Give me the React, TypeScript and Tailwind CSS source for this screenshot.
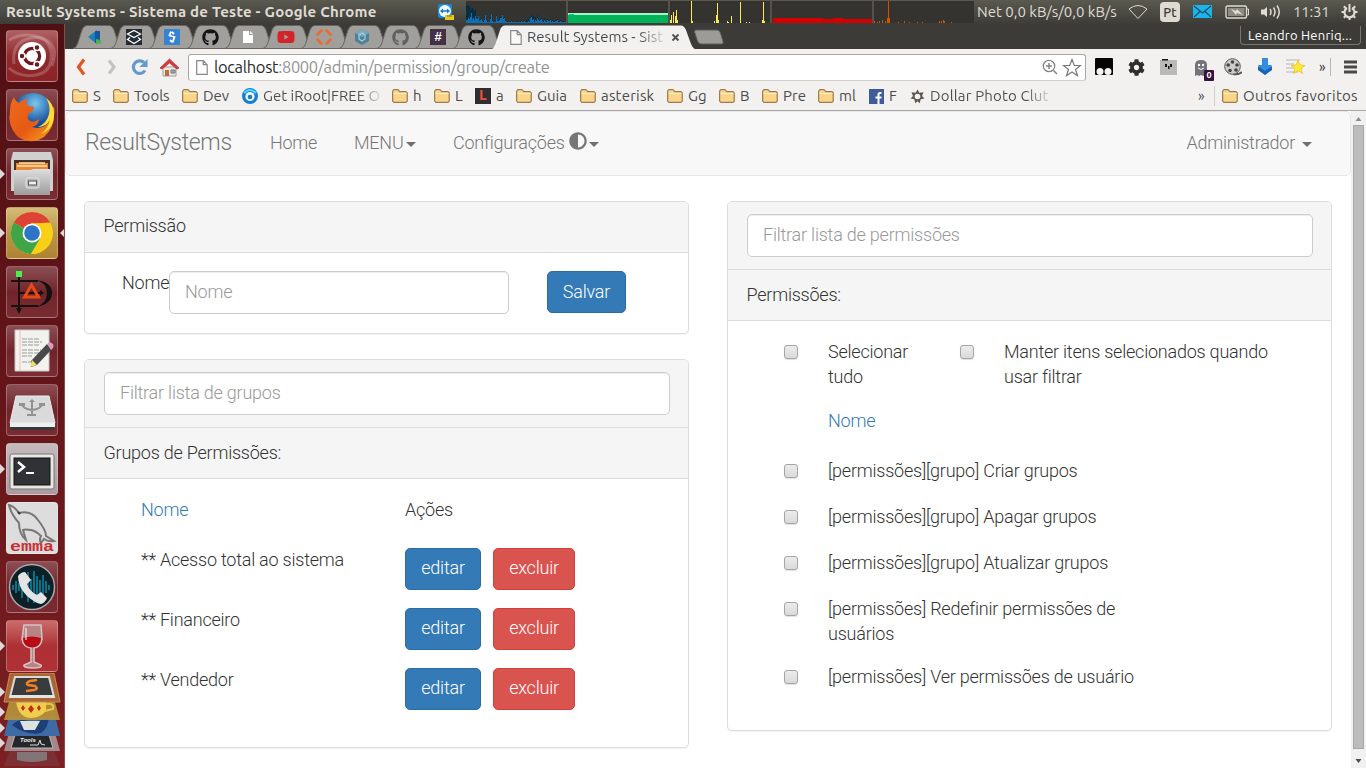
import React from "react";
import { FaGithub, FaYoutube, FaCog, FaAdjust } from "react-icons/fa";

const UBUNTU = "font-['Ubuntu','Noto_Sans',sans-serif]";

/* ---------- top panel ---------- */

const cpu = [18,17,18,16,15,14,15,14,12,14,6,6,7,3,4,5,3,2,4,9,4,2,1,1,5,10,3,2,1,1,8,3,3,4,6,6,9,5,6,3,1,2,1,1,2,3,2,1,1,1,2,1,1,1,2,3,2,1,3,2,3,2,4,2,7,8,6,7,3,6,4,8,5,3,4,5,3,2,5,3,2,4,3,3,4,2,3,2,1,3,3,4,2,2,3,1,2,2,1,1];
const cpuUser = [3,3,5,4,6,10,4,5,3,7,5,4,7,2,3,4,2,1,3,8,3,1,1,1,4,9,2,1,1,1,7,2,2,3,5,5,8,4,5,2,1,1,1,1,1,2,1,1,1,1,1,1,1,1,1,2,1,1,2,1,1,1,2,1,5,6,3,4,1,3,2,5,3,2,3,4,2,1,3,2,1,3,2,2,3,1,2,1,1,2,2,3,1,1,2,1,1,1,1,1];

function Graphs() {
  return (
    <svg width="508" height="24" viewBox="0 0 508 24" shapeRendering="crispEdges" className="ml-[11px] shrink-0">
      <rect y="1" width="508" height="22" fill="#34332f" />
      {[100, 202, 304, 406].map((x) => <rect key={x} x={x} width="2" height="23" fill="#54524b" />)}
      {cpu.map((v, i) => <rect key={i} x={i} y={23 - v} width="1" height={v} fill="#062f42" />)}
      {cpuUser.map((v, i) => <rect key={i} x={i} y={23 - v} width="1" height={v} fill="#0970b9" />)}
      <rect x="102" y="13" width="100" height="10" fill="#00b35b" />
      <rect x="102" y="13" width="100" height="2" fill="#a9f1c9" />
      <rect x="103" y="14" width="5" height="1" fill="#00d66a" />
      {[[204,3],[205,8],[207,11],[209,7],[210,13],[211,3],[225,22],[226,2],[248,2],[251,20],[250,8],[252,3],[261,2],[262,1],[265,7],[274,21],[280,1],[283,1],[297,21],[296,3],[298,2]].map(([x, h]) => (
        <rect key={x} x={x} y={23 - h} width="1" height={h} fill="#fce94f" />
      ))}
      <path d="M307 23V18H357V19H367V18H377V19H406V23z" fill="#d40000" />
      {[[408,2],[411,1],[413,2],[416,3],[419,2],[421,5],[422,22],[423,5],[432,1],[438,2],[443,1],[451,1],[456,1],[473,2],[475,2],[477,3],[478,2],[485,1]].map(([x, h]) => (
        <rect key={x} x={x} y={23 - h} width="1" height={h} fill="#d35400" />
      ))}
    </svg>
  );
}

function TopBar() {
  return (
    <header className={`flex h-6 shrink-0 items-center bg-gradient-to-b from-[#5b5a50] to-[#3d3c38] text-[#dfdbd2] ${UBUNTU}`}>
      <div className="w-[437px] shrink-0 whitespace-nowrap pl-1.5 text-[15px] leading-6 font-bold tracking-[0.24px]">Result Systems - Sistema de Teste - Google Chrome</div>
      <svg width="18" height="18" viewBox="0 0 18 18" className="shrink-0">
        <rect x="1" y="1" width="14" height="14" rx="2" fill="#1689dc" />
        <circle cx="8" cy="8" r="6" fill="#f5fbff" />
        <path d="M3 8l3-2.500v1.700h4V5.500l3 2.500-3 2.500V8.800H6v1.700z" fill="#1279cb" />
        <path d="M8 12h9v5H8z" fill="#efc526" /><path d="M10 13h5" stroke="#8a6c00" />
      </svg>
      <Graphs />
      <div className="ml-[3px] w-[151px] shrink-0 whitespace-nowrap text-[15px]">Net 0,0 kB/s/0,0 kB/s</div>
      <svg width="20" height="16" viewBox="0 0 20 16" fill="none" stroke="#dfdbd2" className="shrink-0">
        <path d="M1 5Q10-2 19 5L10 14.500z" />
      </svg>
      <div className="ml-3 h-5 w-5 shrink-0 rounded-sm bg-[#dfdbd2] text-center text-[13px] leading-5 font-medium text-[#3c3b37]">Pt</div>
      <svg width="19" height="14" viewBox="0 0 19 14" className="ml-[13px] shrink-0">
        <rect width="19" height="13" fill="#19b6ee" />
        <path d="M1 1l8.500 7L18 1M1 12l6-5.500M18 12l-6-5.500" stroke="#2c4a55" fill="none" strokeWidth="1.200" />
      </svg>
      <svg width="25" height="14" viewBox="0 0 25 14" className="ml-[13px] shrink-0">
        <rect x="1" y="1" width="20.500" height="12" rx="1.500" fill="none" stroke="#dfdbd2" strokeWidth="1.400" />
        <rect x="3" y="3" width="16.500" height="8" fill="#8d8a82" />
        <path d="M22 4h1.500v6H22" stroke="#dfdbd2" fill="none" />
        <path d="M6 4l5 2 1-2 6 6-6-2-1 2z" fill="#dfdbd2" />
      </svg>
      <svg width="21" height="16" viewBox="0 0 21 16" className="ml-[11px] shrink-0">
        <path d="M0 5.500h3L6 3v10l-3-2.500H0z" fill="#dfdbd2" />
        <path d="M9 5q2 3 0 6M12.500 3.500q3 4.500 0 9M16 1.500q4.500 6.500 0 13" stroke="#dfdbd2" strokeWidth="1.500" fill="none" />
      </svg>
      <div className="ml-[11px] w-[48px] shrink-0 text-[15px] tracking-[-0.2px]">11:31</div>
      <svg width="17" height="16" viewBox="0 0 16 16" className="shrink-0" stroke="#dfdbd2" fill="none">
        <path d="M5.500 4A5 5 0 1 0 10.500 4" strokeWidth="2.200" />
        <path d="M8 0v8M0 8H3M13 8h3M2.300 2.300l2 2M13.700 2.300l-2 2M2.300 13.700l2-2M13.700 13.700l-2-2M8 13v3" strokeWidth="2" />
      </svg>
    </header>
  );
}

/* ---------- launcher ---------- */

function Tile({ className, left, right, children }: { className: string; left?: boolean; right?: boolean; children: React.ReactNode }) {
  return (
    <div className="relative flex h-[59px] w-[65px] shrink-0 justify-center pr-px">
      <div className={`h-[52px] w-[52px] rounded-[4px] border border-white/25 ${className}`}>
        <svg width="50" height="50" viewBox="1 1 50 50" className="block overflow-visible">{children}</svg>
      </div>
      {left && <svg width="5" height="10" className="absolute left-0 top-[21px]"><path d="M0 0l5 5-5 5z" fill="#ded9d8" /></svg>}
      {right && <svg width="5" height="10" className="absolute right-0 top-[21px]"><path d="M5 0L0 5l5 5z" fill="#ded9d8" /></svg>}
    </div>
  );
}

const WINE = "bg-gradient-to-b from-[#8a4e54] via-[#70242a] to-[#7b2c33]";

function Launcher() {
  return (
    <aside className="flex w-[65px] shrink-0 flex-col overflow-hidden border-r border-[#8a4a4a] bg-gradient-to-b from-[#4f1013] via-[#651519] to-[#7c2022] pt-1.5">
      <Tile className="bg-gradient-to-b from-[#b06064] via-[#8f2a2e] to-[#8c2326]">
        <g fill="none" stroke="#fff" strokeOpacity=".2" strokeWidth="3">
          <path d="M3 38Q14 48 30 45T45 25M8 34Q5 12 25 8T46 30" /><path d="M3 10Q18 1 36 8T46 36" />
        </g>
        <circle cx="26" cy="26" r="14" fill="#fff" />
        <circle cx="26" cy="26" r="7.500" fill="none" stroke="#6d1a1e" strokeWidth="3.500" />
        <g stroke="#fff" strokeWidth="1.500"><path d="M26 26l5-9M26 26l5 9M26 26H15" /><circle cx="31" cy="17.500" r="3" fill="#6d1a1e" /><circle cx="31" cy="34.500" r="3" fill="#6d1a1e" /><circle cx="16" cy="26" r="3" fill="#6d1a1e" /></g>
        <circle cx="26" cy="26" r="5.800" fill="#fff" />
      </Tile>
      <Tile className={WINE}>
        <defs>
          <radialGradient id="globe" cx=".55" cy=".25"><stop offset="0" stopColor="#7cc8f0" /><stop offset="1" stopColor="#134a9a" /></radialGradient>
          <linearGradient id="fox" x2="1" y2="1"><stop offset="0" stopColor="#ee6a1d" /><stop offset=".55" stopColor="#e65a14" /><stop offset="1" stopColor="#f8a91c" /></linearGradient>
        </defs>
        <circle cx="27" cy="25" r="21" fill="url(#globe)" />
        <path d="M8 8q1 4 5 6 4-4 9-4-3 4 0 7l6 1q0 4-5 6-3 5 1 8 4 2 9-2 0 6-7 8 10 3 16-4 4-7 4-15 4-4 2 8 0 12-10 21-14 9-27-1Q1 36 4 22q0-8 4-14z" fill="url(#fox)" />
        <path d="M40 9q5 8 3 16-2 9-11 13 8 0 12-7-2 9-9 14 14-5 13-22-1-9-8-14z" fill="#ffdc3a" />
      </Tile>
      <Tile left className={WINE}>
        <defs><linearGradient id="cab" x2="0" y2="1"><stop offset="0" stopColor="#dedede" /><stop offset="1" stopColor="#9c9c9c" /></linearGradient></defs>
        <path d="M7 4h38l2 8v31H5V12z" fill="#d0d0d0" /><path d="M8 12h36v12H8z" fill="#4a2d22" />
        <path d="M10 15h32v9H10z" fill="#e88636" /><path d="M11 18h30M13 15h26" stroke="#ffe2b0" strokeWidth="1.500" />
        <path d="M8 22h17l2-1h17v26H8z" fill="url(#cab)" />
        <rect x="20" y="30" width="13" height="10" rx="2" fill="#bbb" stroke="#e6e6e6" /><rect x="22.500" y="33" width="8" height="4" fill="#eee" stroke="#555" />
      </Tile>
      <Tile left right className="bg-gradient-to-b from-[#d5bc76] via-[#b9974a] to-[#af8232]">
        <circle cx="26" cy="26" r="21" fill="#f8cf12" />
        <path d="M26 26L7.800 15.500A21 21 0 0 1 44.200 15.500L26 16.500z" fill="#dd4236" />
        <path d="M26 26L7.800 15.500A21 21 0 0 0 25 47L34.500 31z" fill="#3fa648" />
        <path d="M25 16.500h19.200A21 21 0 0 1 25 47L34.500 31z" fill="#fad017" />
        <circle cx="26" cy="26" r="9.500" fill="#fff" /><circle cx="26" cy="26" r="7.800" fill="#2d76c7" />
      </Tile>
      <Tile className={WINE}>
        <g fill="none" stroke="#171111" strokeWidth="2"><path d="M13 9v34M5 15h27M5 40h27M12 27h25" /></g>
        <path d="M30 14q16 2 16 13T30 41q11-4 11-14T30 14z" fill="#151113" />
        <path d="M25.500 19l7 12h-14z" fill="none" stroke="#e84b12" strokeWidth="3" />
        <path d="M10 42h6l-3 6zM34 24l4 3-4 3z" fill="#171111" /><rect x="10" y="5" width="6" height="6" fill="#4cef4c" />
      </Tile>
      <Tile className={WINE}>
        <path d="M9 5h34v41H9z" fill="#f2f2ef" stroke="#c7c7c4" /><path d="M14 5v41" stroke="#eebaba" />
        <path d="M16 14h18M16 17h20M16 20h18M16 25h19M16 28h17M16 31h10M16 37h18" stroke="#9b9b9b" strokeDasharray="5 1" />
        <path d="M25 36L41 19l5 5-15 16-6 2z" fill="#47494a" /><path d="M41 19l3-2q5 2 3 6l-2 2z" fill="#dc9bbd" /><path d="M26 35l5 5-7 2z" fill="#eddf6c" />
      </Tile>
      <Tile className={WINE}>
        <path d="M10 12h33l6 27H4z" fill="#dadada" stroke="#eee" /><path d="M4 39h45v4H4z" fill="#eee" /><path d="M5 43h43v3H5z" fill="#34383b" />
        <g stroke="#929292" strokeWidth="2" fill="none"><path d="M26 17v14M16 20q1 5 10 6 9-1 10-6M21 31h9" /></g><path d="M23 18l3-3 3 3zM13 19h6v3h-6zM33 19h6v3h-6z" fill="#929292" />
      </Tile>
      <Tile left className="bg-gradient-to-b from-[#c6babd] to-[#a99aa0]">
        <rect x="4" y="11" width="44" height="35" rx="2" fill="#e7e7e5" stroke="#777" /><rect x="8" y="15" width="36" height="27" fill="#303235" stroke="#111" />
        <path d="M12 19l6 5-6 5" stroke="#fff" strokeWidth="2.500" fill="none" /><path d="M20 30h8" stroke="#fff" strokeWidth="2" />
      </Tile>
      <Tile className="bg-[#deddde]">
        <path d="M3 3q5 1 10 8 12-3 19 7 8 10 8 16l8 5q-6 1-10-2l-3 4q-2-3 0-7-5-5-10-6-6-1-8 0l3 10q-7-6-7-17Q5 12 3 3z" fill="none" stroke="#777" strokeWidth="2" />
        <path d="M12 10l2 2" stroke="#333" strokeWidth="2" />
        <text x="26" y="48.500" textAnchor="middle" textLength="44" lengthAdjust="spacingAndGlyphs" fill="#ca2d32" fontFamily="Liberation Mono" fontWeight="bold" fontSize="14">emma</text>
      </Tile>
      <Tile className={WINE}>
        <circle cx="26" cy="26" r="22.500" fill="#0d2027" stroke="#aaa8a8" strokeWidth="1.500" />
        <path d="M7 24v5M10 20v12M13 22v8M16 15v22M19 20v12M22 11v30M25 18v18M28 10v32M31 15v22M34 19v15M37 14v25M40 20v12M43 24v5" stroke="#08718a" strokeWidth="2" />
        <path d="M12 15q3-4 7-4l6 8-4 4q2 7 10 11l4-3 6 6q-2 5-6 6-6-1-14-8-9-9-9-20z" fill="#e4e4e4" />
      </Tile>
      <Tile left className="bg-gradient-to-b from-[#c96b6c] via-[#ad3034] to-[#b13035]">
        <path d="M18 5h17l1 14q-1 8-8 9v14l7 3q2 3-8 3t-9-3l7-3V28q-8-1-9-9z" fill="#b98284" stroke="#d6c3c3" strokeWidth="1.500" />
        <path d="M17 18q9-3 18 0 0 9-9 9.500-9-.5-9-9.500z" fill="#ba0a15" /><path d="M20 8v12" stroke="#fff" strokeOpacity=".5" strokeWidth="2" />
      </Tile>
      <svg width="64" height="95" viewBox="0 673 64 95" className="-mt-[6px] shrink-0">
        <path d="M10 750h44l6 16H4z" fill="#7c3035" /><path d="M17 752h30v8q-15 4-30 0z" fill="#837477" />
        <path d="M9 733h46l5 18H4z" fill="#a3878a" /><path d="M15 735h34l4 13H11z" fill="#25272a" stroke="#bbb" />
        <text x="20" y="742" fontSize="6" fill="#eee" fontFamily="Liberation Sans" fontWeight="bold" fontStyle="italic">Tools</text>
        <path d="M30 745h8l2-5 1 4 4 1" stroke="#ddd" fill="none" />
        <path d="M9 716h46l5 20H4z" fill="#3e6aa6" /><path d="M12 725q8-8 18-3 17-2 19-6-1 13-8 17-15 3-29-8z" fill="#1d3f78" /><path d="M20 721h20l-5 9H24z" fill="#dee3df" />
        <path d="M9 702h46l5 18H4z" fill="#b8943c" fillOpacity=".9" /><path d="M16 702h30v9q-6 7-15 7-12 0-15-16z" fill="#f0ce4c" /><path d="M46 704q9-1 7 5l-8 2" fill="none" stroke="#e9c847" strokeWidth="2" /><path d="M23 705l2 3-2 3-2-3zM31 705l3 4-3 4-3-4zM39 705l2 3-2 3-2-3z" fill="#c42c19" />
        <path d="M10 673h44l6 29H4z" fill="#a96632" stroke="#c78b5a" />
        <path d="M15 677h34l5 20H10z" fill="#393b3c" stroke="#dadad8" strokeWidth="2" /><path d="M10 695h44v3H10z" fill="#e4e4e2" />
        <path d="M37 680l-7 1q-5 2-2 4l7 1q4 3-1 4l-8 1" stroke="#f58220" strokeWidth="2.500" fill="none" />
        {[692, 712, 728, 743].map((y) => <path key={y} d={`M0 ${y - 5}l5 5-5 5z`} fill="#ded9d8" />)}
      </svg>
    </aside>
  );
}

/* ---------- browser chrome ---------- */

const PageIcon = ({ fill = "#fff", stroke = "#888" }: { fill?: string; stroke?: string }) => (
  <svg width="12" height="15" viewBox="0 0 12 15"><path d="M.7.700h6.500l4 4V14.300H.7zM7.200.700v4h4" fill={fill} stroke={stroke} strokeWidth="1.200" /></svg>
);

const tabIcons = [
  <svg width="16" height="16"><path d="M0 8l9-7v14z" fill="#1583b5" /><path d="M7 2h5v12H7z" fill="#1454a0" /><path d="M8 10l5 1v4l-5-1z" fill="#4bb34b" /></svg>,
  <svg width="16" height="16"><rect width="16" height="16" fill="#232b34" /><path d="M8 1.500l6.500 3.500L8 8.500 1.500 5zM4 8.500l-2.500 2L8 14.500l6.500-4-2.500-2" fill="none" stroke="#fff" strokeWidth="1.300" /></svg>,
  <svg width="16" height="16"><rect width="16" height="16" rx="1" fill="#3483d5" /><path d="M7 2.500L5.500 6.500l5 1.500-2 5.500M10 5L8 3M6 11l2 2" fill="none" stroke="#fff" strokeWidth="1.800" /></svg>,
  <FaGithub size={17} color="#151515" />,
  <svg width="12" height="14"><path d="M1 1h6v4h4v8H1z" fill="#fff" /><path d="M8 1l3 3H8z" fill="#fff" /></svg>,
  <FaYoutube size={18} color="#d42428" />,
  <svg width="16" height="16" fill="none" stroke="#f16728" strokeWidth="2.500"><path d="M1.500 6.500v-1l4-4h1M9.500 1.500h1l4 4v1M14.500 9.500v1l-4 4h-1M6.500 14.500h-1l-4-4v-1" /></svg>,
  <svg width="16" height="16"><path d="M8 0l7 4v8l-7 4-7-4V4z" fill="#4e8198" /><path d="M8 0l7 4-7 4-7-4z" fill="#7aaabb" /><path d="M8 4l3 2v4l-3 2-3-2V6z" stroke="#a5cfdc" strokeWidth="1.200" fill="none" /></svg>,
  <FaGithub size={17} color="#606060" />,
  <div className="h-4 w-4 bg-[#433044] text-center font-['Liberation_Sans'] text-[13px] leading-4 font-bold text-white">#</div>,
  <FaGithub size={17} color="#151515" />,
];

function Tabs() {
  return (
    <div className={`flex h-[25px] items-end bg-[#3c3b37] pl-[12px] ${UBUNTU}`}>
      {tabIcons.map((icon, i) => (
        <div key={i} className="relative flex h-6 w-[38px] shrink-0 items-center justify-center">
          <svg width="50" height="24" className="absolute -left-1 top-0"><path d="M0 23.500Q3 23 4.500 19L9 5Q10.500.500 14 .5H36Q39.500.500 41 5L45.500 19Q47 23 50 23.500z" fill="#a09f9c" stroke="#686662" /></svg>
          <span className="relative">{icon}</span>
        </div>
      ))}
      <div className="relative -ml-1 flex h-6 w-[206px] shrink-0 items-center pl-[19px]">
        <svg width="206" height="25" className="absolute left-0 top-0"><path d="M0 25Q3 23 4.500 19L9 5Q10.500.500 14 .5H190Q193 .5 195 5L200 19Q202 24 206 25z" fill="#f2f1f0" /></svg>
        <span className="relative"><PageIcon fill="#fafafa" /></span>
        <span className="relative ml-[5px] w-[138px] overflow-hidden whitespace-nowrap bg-gradient-to-r from-[#45484b] from-80% to-[#dddddd] bg-clip-text text-[15px] leading-5 text-transparent">Result Systems - Sist</span>
        <svg width="9" height="9" className="relative ml-[6px]"><path d="M1.500 1.500l6 6M7.500 1.500l-6 6" stroke="#50504f" strokeWidth="1.800" /></svg>
      </div>
      <svg width="31" height="16" className="mb-[4px] -ml-[4px] shrink-0"><path d="M3 1H24Q26.500 1 27.500 4L30 12.500Q31 15 28.500 15H8Q5.500 15 4.500 12L1.500 3Q1 1 3 1z" fill="#9c9b98" stroke="#5d5c58" /></svg>
      <div className="flex-1" />
      <div className="mr-[5px] mb-1 h-[19px] w-[121px] rounded-b border border-t-0 border-[#78776f] pl-[7px] text-[13px] leading-[19px] tracking-[0.25px] whitespace-nowrap text-white">Leandro Henriq...</div>
    </div>
  );
}

function Toolbar() {
  return (
    <div className={`flex h-[36px] items-center bg-[#f2f1f0] ${UBUNTU}`}>
      <svg width="12" height="18" className="ml-[10px] shrink-0"><path d="M9 1.500L3.500 9 9 16.500" fill="none" stroke="#e35524" strokeWidth="3.200" /></svg>
      <svg width="12" height="18" className="ml-[19px] shrink-0"><path d="M3 2.500L8 9l-5 6.500" fill="none" stroke="#c4c1be" strokeWidth="3.200" /></svg>
      <svg width="18" height="18" className="ml-[13px] shrink-0"><path d="M14 12.500A6.300 6.300 0 1 1 13 4.500" fill="none" stroke="#6399d3" strokeWidth="3.200" /><path d="M16.500 1v8H8.500z" fill="#6399d3" /></svg>
      <svg width="19" height="19" viewBox="0 0 19 19" className="ml-[11px] shrink-0"><path d="M3 9h13v9H3z" fill="#ede9df" stroke="#9e9e99" /><path d="M0 10L9.500 1 19 10l-2 1L9.500 5 2 11z" fill="#d53b40" stroke="#b2282e" strokeWidth=".7" /><path d="M5 12h4v6H5z" fill="#b96d3a" /><path d="M11 12h4v3h-4z" fill="#8daace" stroke="#777" /></svg>
      <div className="ml-[9px] flex h-[27px] w-[898px] shrink-0 items-center rounded-[3px] border border-[#a9a7a5] border-b-[#d0cecb] bg-white pl-[7px] pr-[3px]">
        <PageIcon />
        <span className="ml-1.5 whitespace-nowrap text-[16.500px] tracking-[-0.33px] text-[#939393]"><span className="text-[#2b2b2b]">localhost</span>:8000/admin/permission/group/create</span>
        <div className="flex-1" />
        <svg width="16" height="16" fill="none" stroke="#858585"><circle cx="7" cy="7" r="5.700" strokeWidth="1.300" /><path d="M4 7h6M7 4v6M11.500 11.500L15 15" strokeWidth="1.500" /></svg>
        <svg width="20" height="19" viewBox="0 0 20 19" className="ml-1"><path d="M10 1.500l2.300 6h6.200l-5 4 2 6.200L10 14l-5.500 3.700 2-6.200-5-4h6.200z" fill="#fff" stroke="#777" strokeWidth="1.200" /></svg>
      </div>
      <svg width="18" height="18" className="ml-[9px] shrink-0"><rect width="18" height="17" rx="1" fill="#050505" /><circle cx="5" cy="13.500" r="3.500" fill="#f3f3f3" /><circle cx="13" cy="13.500" r="3.500" fill="#f3f3f3" /></svg>
      <FaCog size={17} color="#2e2e2e" className="ml-[15px] shrink-0" />
      <svg width="17" height="18" className="ml-[15px] shrink-0"><path d="M0 2h17v15H0z" fill="#b9b9b9" /><path d="M2 1h6v1.500H2zM5 6h2v3H5zM10 6h2v3h-2zM8 8h1.500v3H8z" fill="#151515" /></svg>
      <div className="relative ml-[16px] w-[17px] shrink-0">
        <svg width="15" height="17"><path d="M2 17V6Q2 1 8 1t6 5v11l-2-1-2 1-2-1-2 1-2-1z" fill="#737379" /><circle cx="6" cy="6" r="1.200" fill="#fff" /><circle cx="10" cy="6" r="1.200" fill="#fff" /><path d="M5 9q3 3 6 0" stroke="#fff" fill="none" /></svg>
        <span className="absolute top-[11px] left-[11px] h-[11px] w-[10px] rounded-[1px] bg-[#351438] text-center text-[9px] leading-[11px] font-bold text-white">0</span>
      </div>
      <svg width="18" height="18" className="ml-[14px] shrink-0"><path d="M9 16q6 1 9-2" stroke="#555" strokeWidth="2" fill="none" /><circle cx="8.500" cy="8.500" r="7.800" fill="#ccc" stroke="#555" /><g fill="#444"><circle cx="8.500" cy="4" r="1.800" /><circle cx="4.200" cy="7" r="1.800" /><circle cx="6" cy="12.500" r="1.800" /><circle cx="12" cy="12" r="1.800" /><circle cx="13" cy="7" r="1.800" /></g></svg>
      <svg width="16" height="18" className="ml-[15px] shrink-0"><path d="M5 0h6v7h4l-7 10L1 7h4z" fill="#348de0" /><path d="M1 8l7 5 7-5v4l-7 5-7-5z" fill="#1465b3" /></svg>
      <svg width="20" height="18" className="ml-[13px] shrink-0"><path d="M0 2h14M0 6h8M0 10h8M0 14h12" stroke="#d2d2d2" strokeWidth="2" /><path d="M12 2.500l2 4.500 5 .5-4 3 1.500 5L12 12.500 7.500 15.500l1.300-5L5 7.500l5-.5z" fill="#ffed2d" stroke="#e3b71e" strokeWidth=".7" /></svg>
      <span className="ml-[13px] w-[11px] shrink-0 text-[14px] leading-4 text-[#333]">»</span>
      <div className="h-[18px] w-px shrink-0 bg-[#b9b7b4]" />
      <svg width="14" height="14" className="ml-[13px] shrink-0"><path d="M0 2h13M0 7h13M0 12h13" stroke="#484848" strokeWidth="3" /></svg>
    </div>
  );
}

const Folder = () => (
  <svg width="16" height="14" viewBox="0 0 16 14" className="shrink-0"><path d="M.7 12V2.200Q.7.700 2 .7h4Q7.300.700 7.300 2.700H14Q15.200 2.700 15.200 4v8q0 1.300-1.200 1.300H2Q.7 13.300.7 12z" fill="#fbd58a" stroke="#8e5f31" /><path d="M1.500 4.500h13" stroke="#fff1ce" /></svg>
);

const bookmarks: { label: string; cls: string; fade?: boolean; icon?: React.ReactNode }[] = [
  { label: "S", cls: "w-[41px]" },
  { label: "Tools", cls: "w-[69px]" },
  { label: "Dev", cls: "w-[60px]" },
  { label: "Get iRoot|FREE O", cls: "w-[150px]", fade: true, icon: <svg width="16" height="16" className="shrink-0"><circle cx="8" cy="8" r="8" fill="#147ed4" /><circle cx="8" cy="8.500" r="4.600" fill="#eaf8ff" /><circle cx="8" cy="9" r="2.300" fill="#227abd" /><path d="M2 5q6-6 12 0" stroke="#54dbff" strokeWidth="2" fill="none" /></svg> },
  { label: "h", cls: "w-[42px]" },
  { label: "L", cls: "w-[41px]" },
  { label: "a", cls: "w-[41px]", icon: <div className="h-4 w-4 shrink-0 bg-[#2d2d32] text-center font-['Liberation_Mono'] text-[14px] leading-4 font-bold text-[#ee4e3c]">L</div> },
  { label: "Guia", cls: "w-[64px]" },
  { label: "asterisk", cls: "w-[87px] tracking-[0.2px]" },
  { label: "Gg", cls: "w-[52px]" },
  { label: "B", cls: "w-[43px]" },
  { label: "Pre", cls: "w-[56px]" },
  { label: "ml", cls: "w-[51px]" },
  { label: "F", cls: "w-[41px]", icon: <svg width="15" height="15" className="shrink-0"><path d="M0 0h15v15H0z" fill="#405a9b" /><path d="M12.500 4H11q-1.500 0-1.500 1.500V15M6.500 8.500h6" stroke="#fff" strokeWidth="2" fill="none" /></svg> },
  { label: "Dollar Photo Clut", cls: "w-[281px] tracking-[0.15px]", fade: true, icon: <svg width="15" height="15" viewBox="0 0 15 15" className="shrink-0"><path d="M7.500 .5l1.800 3.200 4.200-.4-1.500 3.600 2.500 2.600-3.800.8-1 4-2.200-2-2.200 2-1-4L.5 9.500 3 6.900 1.500 3.300l4.200.4z" fill="#5d584d" /><circle cx="7.500" cy="7.500" r="2.800" fill="#f2f1f0" /></svg> },
];

function Bookmarks() {
  return (
    <div className={`flex h-[26px] items-center border-b border-[#a9a7a5] bg-[#f2f1f0] pb-[3px] pl-[7px] text-[15px] leading-5 text-[#4c4c4c] ${UBUNTU}`}>
      {bookmarks.map((b) => (
        <div key={b.label} className={`flex shrink-0 items-center gap-[5px] whitespace-nowrap ${b.cls}`}>
          {b.icon ?? <Folder />}
          {b.fade
            ? <span className="bg-gradient-to-r from-[#4c4c4c] from-80% to-[#d8d8d8] bg-clip-text text-transparent">{b.label}</span>
            : <span>{b.label}</span>}
        </div>
      ))}
      <span className="ml-[7px] w-[16px] text-[14px]">»</span>
      <div className="h-5 w-px bg-[#d0cecb]" />
      <div className="ml-[7px] flex items-center gap-[5px] whitespace-nowrap tracking-[0.28px]"><Folder /><span>Outros favoritos</span></div>
    </div>
  );
}

/* ---------- web page ---------- */

const Caret = ({ className = "" }: { className?: string }) => (
  <span className={`inline-block border-x-[5px] border-t-[5px] border-x-transparent border-t-[#6f6f6f] align-middle ${className}`} />
);

function Navbar() {
  return (
    <nav className="flex h-[65px] items-center rounded-[5px] border border-[#e7e7e7] bg-[#f8f8f8] pr-[38px] pb-[2px] pl-[19px] tracking-[-0.24px] text-[#777]">
      <span className="w-[185px] text-[23px] tracking-[-0.32px]">ResultSystems</span>
      <span className="w-[84px]">Home</span>
      <span className="w-[99px] whitespace-nowrap">MENU<Caret className="ml-[3px]" /></span>
      <span className="flex items-center whitespace-nowrap">Configurações<FaAdjust size={18} className="mb-[3px] ml-1" /><Caret className="mt-[3px] ml-[2px]" /></span>
      <span className="ml-auto whitespace-nowrap">Administrador<Caret className="ml-[7px]" /></span>
    </nav>
  );
}

const Panel = ({ children, className = "" }: { children: React.ReactNode; className?: string }) => (
  <section className={`overflow-hidden rounded-[5px] border border-[#ddd] bg-white shadow-[0_1px_1px_rgba(0,0,0,.05)] ${className}`}>{children}</section>
);
const Heading = ({ children, className = "pt-[11px]" }: { children: React.ReactNode; className?: string }) => (
  <div className={`h-[51px] border-b border-[#ddd] bg-[#f5f5f5] px-[18.500px] leading-[26px] ${className}`}>{children}</div>
);
const Field = ({ placeholder, className = "" }: { placeholder: string; className?: string }) => (
  <input placeholder={placeholder} className={`h-[43px] rounded-[5px] border border-[#ccc] bg-white px-[15px] pb-[2px] tracking-[-0.22px] shadow-[inset_0_1px_1px_rgba(0,0,0,.075)] outline-none placeholder:text-[#999] ${className}`} />
);
const Filter = ({ placeholder }: { placeholder: string }) => (
  <div className="h-[68px] border-b border-[#ddd] bg-[#f5f5f5] px-[18px] pt-3"><Field placeholder={placeholder} className="ml-px w-[566px]" /></div>
);
const Button = ({ label, className }: { label: string; className: string }) => (
  <button className={`h-[42px] shrink-0 rounded-[5px] border tracking-[-0.22px] text-white ${className}`}>{label}</button>
);
const Check = () => (
  <input type="checkbox" className="mt-[6px] h-[14px] w-[14px] shrink-0 appearance-none rounded-[3px] border border-[#a5a5a5] bg-gradient-to-b from-[#ececec] to-[#dadada] shadow-[0_1px_1px_rgba(0,0,0,.12)]" />
);

const BLUE = "bg-[#337ab7] border-[#2e6da4]";
const groups = ["** Acesso total ao sistema", "** Financeiro", "** Vendedor"];
const permissions = [
  { label: "[permissões][grupo] Criar grupos", cls: "h-[46px]" },
  { label: "[permissões][grupo] Apagar grupos", cls: "h-[46px]" },
  { label: "[permissões][grupo] Atualizar grupos", cls: "h-[46px]" },
  { label: "[permissões] Redefinir permissões de usuários", cls: "h-[68px]" },
  { label: "[permissões] Ver permissões de usuário", cls: "h-[46px]" },
];

function Page() {
  return (
    <main className="flex min-h-0 flex-1 bg-white">
      <div className="min-w-0 flex-1 font-['Roboto',sans-serif] text-[18px] leading-[25px] font-light tracking-[-0.23px] text-[#333]">
        <Navbar />
        <div className="mt-[25px] flex items-start gap-[38px] px-[19px]">
          <div className="flex w-[605px] flex-col gap-[25px]">
            <Panel className="h-[133px]">
              <Heading>Permissão</Heading>
              <div className="flex pt-[18px] pl-[37px]">
                <span className="-mt-px w-[47px]">Nome</span>
                <Field placeholder="Nome" className="w-[340px]" />
                <Button label="Salvar" className={`ml-[38px] w-[79px] pb-[2px] ${BLUE}`} />
              </div>
            </Panel>
            <Panel className="h-[389px]">
              <Filter placeholder="Filtrar lista de grupos" />
              <Heading className="pt-3">Grupos de Permissões:</Heading>
              <div className="pt-[18px] pl-[56px]">
                <div className="flex h-[51px]"><span className="w-[264px] text-[#337ab7]">Nome</span><span>Ações</span></div>
                {groups.map((g) => (
                  <div key={g} className="flex h-[60px]">
                    <span className="-mt-px w-[264px] shrink-0">{g}</span>
                    <Button label="editar" className={`w-[76px] pb-[3px] ${BLUE}`} />
                    <Button label="excluir" className="ml-3 w-[82px] border-[#d43f3a] bg-[#d9534f] pb-[3px]" />
                  </div>
                ))}
              </div>
            </Panel>
          </div>
          <Panel className="h-[530px] w-[605px]">
            <Filter placeholder="Filtrar lista de permissões" />
            <Heading className="pt-3">Permissões:</Heading>
            <div className="pt-[18px] pl-[56px]">
              <div className="flex h-[69px]">
                <Check /><span className="ml-[30px] w-[132px] pr-10">Selecionar tudo</span>
                <Check /><span className="ml-[30px] w-[290px]">Manter itens selecionados quando usar filtrar</span>
              </div>
              <div className="h-[50px] pl-[44px] text-[#337ab7]">Nome</div>
              {permissions.map((p) => (
                <div key={p.label} className={`flex ${p.cls}`}><Check /><span className="ml-[30px] w-[315px]">{p.label}</span></div>
              ))}
            </div>
          </Panel>
        </div>
      </div>
      <div className="flex w-[15px] shrink-0 flex-col items-center bg-[#f1f1f1]">
        <svg width="15" height="14"><path d="M4.500 10h6l-3-4z" fill="#8c8c8c" /></svg>
        <div className="w-[11px] flex-1 border border-[#a8a8a8] bg-[#bcbcbc]" />
        <svg width="15" height="19"><path d="M4.500 10h6l-3 4z" fill="#4b4b4b" /></svg>
      </div>
    </main>
  );
}

export default function App() {
  return (
    <div className="flex h-[768px] w-[1366px] flex-col overflow-hidden">
      <TopBar />
      <div className="flex min-h-0 flex-1">
        <Launcher />
        <div className="flex min-w-0 flex-1 flex-col">
          <Tabs />
          <Toolbar />
          <Bookmarks />
          <Page />
        </div>
      </div>
    </div>
  );
}
